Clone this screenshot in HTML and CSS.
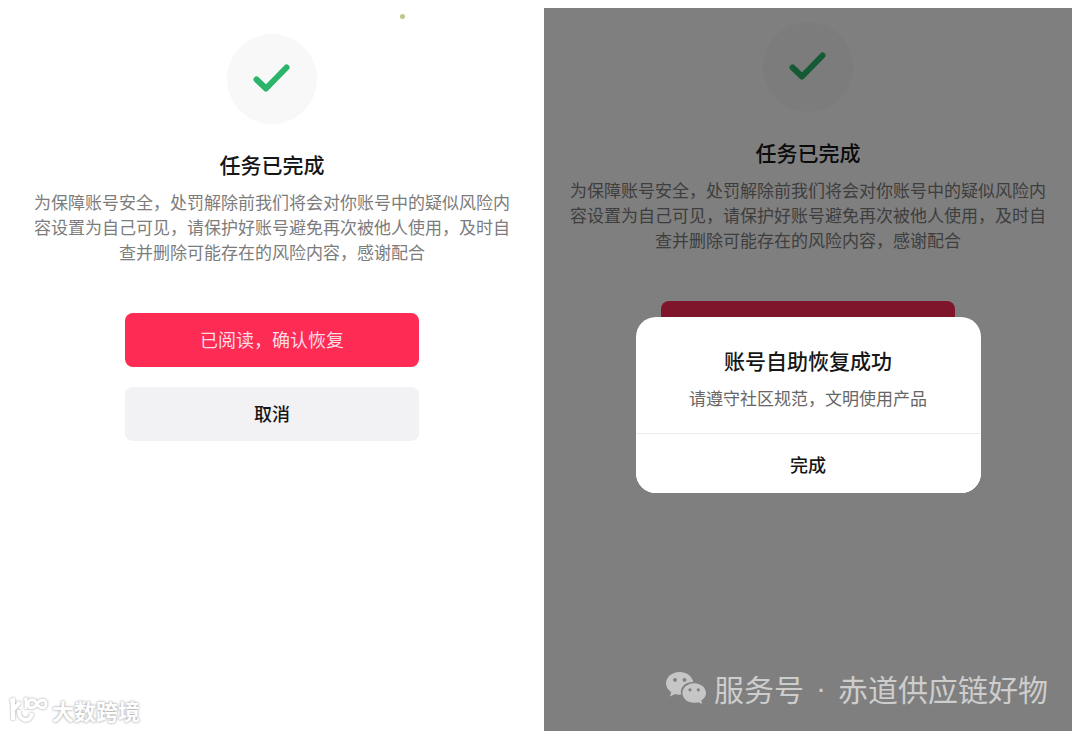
FILE: index.html
```html
<!DOCTYPE html>
<html lang="zh-CN">

<head>
    <meta charset="utf-8">
    <meta name="viewport" content="width=device-width, initial-scale=1">
    <title>任务已完成</title>
    <link rel="stylesheet" href="styles.css">
</head>

<body>
<main class="screens">

    <section class="screen">
        <i class="dot"></i>
        <div class="badge">
            <svg class="check" viewBox="0 0 40 30"><path d="M4.5 15.5 L14 24.5 L34.5 3.5"/></svg>
        </div>
        <h1 class="title">任务已完成</h1>
        <p class="text">为保障账号安全，处罚解除前我们将会对你账号中的疑似风险内容设置为自己可见，请保护好账号避免再次被他人使用，及时自查并删除可能存在的风险内容，感谢配合</p>
        <div class="actions">
            <button class="btn btn-red" type="button">已阅读，确认恢复</button>
            <button class="btn btn-grey" type="button">取消</button>
        </div>

        <div class="brand">
            <svg class="brand-logo" viewBox="0 0 40 28">
                <path class="thick" d="M2 5 L5 4 V24 M5 14 L12 6"/>
                <path class="thick" d="M11 14 C10 26 23 27 24 17"/>
                <path class="thin" d="M16 4 L18 3 V13"/>
                <path class="thin" d="M29 8 C26 2 20 3 20 8 C20 13 26 13 29 8 C32 3 38 3 38 8 C38 13 32 13 29 8 Z"/>
            </svg>
            <span>大数跨境</span>
        </div>
    </section>

    <section class="screen screen-dimmed">
        <div class="badge">
            <svg class="check" viewBox="0 0 40 30"><path d="M4.5 15.5 L14 24.5 L34.5 3.5"/></svg>
        </div>
        <h1 class="title">任务已完成</h1>
        <p class="text">为保障账号安全，处罚解除前我们将会对你账号中的疑似风险内容设置为自己可见，请保护好账号避免再次被他人使用，及时自查并删除可能存在的风险内容，感谢配合</p>
        <div class="actions">
            <button class="btn btn-red" type="button" tabindex="-1"></button>
        </div>

        <!-- popup over the page -->
        <div class="overlay">
            <div class="modal" role="dialog" aria-labelledby="modal-title">
                <div class="modal-body">
                    <h2 class="title" id="modal-title">账号自助恢复成功</h2>
                    <p class="text">请遵守社区规范，文明使用产品</p>
                </div>
                <button class="modal-btn" type="button">完成</button>
            </div>
        </div>

        <div class="account">
            <svg class="wechat" viewBox="0 0 40 32">
                <path fill-rule="evenodd" d="M13.5 0 C6 0 0 5 0 11.3 C0 15 2 18 5.2 20.2 L4 24.5 L9 22 C11 22.6 13 22.8 15.2 22.6 C13.5 15.5 19 10 27.3 10 C26 4 20.5 0 13.5 0 Z M9 6 A1.9 1.9 0 1 1 9 9.8 A1.9 1.9 0 1 1 9 6 Z M18.5 6 A1.9 1.9 0 1 1 18.5 9.8 A1.9 1.9 0 1 1 18.5 6 Z"/>
                <path fill-rule="evenodd" d="M28.2 11.2 C21.7 11.2 16.4 15.6 16.4 21 C16.4 26.5 21.7 30.8 28.2 30.8 C29.7 30.8 31 30.6 32.3 30.2 L36.2 32 L35.2 28.6 C38.2 26.8 40 24 40 21 C40 15.6 34.7 11.2 28.2 11.2 Z M24 16.2 A1.6 1.6 0 1 1 24 19.4 A1.6 1.6 0 1 1 24 16.2 Z M32.3 16.2 A1.6 1.6 0 1 1 32.3 19.4 A1.6 1.6 0 1 1 32.3 16.2 Z"/>
            </svg>
            <span>服务号</span>
            <span class="account-sep">·</span>
            <span>赤道供应链好物</span>
        </div>
    </section>

</main>
</body>
</html>
```

FILE: styles.css
```css
* {
    box-sizing: border-box;
}

body {
    margin: 0;
    background-color: white;
    font-family: "Noto Sans CJK SC", "Liberation Sans", sans-serif;
    color: #161616;
}

h1, h2, p {
    margin: 0;
}

button {
    font-family: inherit;
    border: none;
    padding: 0;
}

.screens {
    display: grid;
    grid-template-columns: 1fr 1fr;
    gap: 8px;
    min-height: 100vh;
    padding: 8px 8px 0;
}

.screen {
    position: relative;
    padding: 26px 24px 0;
    text-align: center;
}
.screen-dimmed {
    padding-top: 14px;
}

.badge {
    display: flex;
    align-items: center;
    justify-content: center;
    width: 90px;
    height: 90px;
    margin: 0 auto 25px;
    border-radius: 50%;
    background-color: #f8f8f8;
}
.check {
    width: 40px;
    height: 30px;
    fill: none;
    stroke: #2cb56a;
    stroke-width: 6;
    stroke-linecap: round;
    stroke-linejoin: round;
}

.title {
    font-size: 21px;
    font-weight: 500;
    line-height: 30px;
}
.text {
    margin-top: 10px;
    font-size: 17px;
    line-height: 25px;
    color: #7c7c7c;
}

.actions {
    display: flex;
    flex-direction: column;
    gap: 20px;
    margin-top: 49px;
    padding: 0 93px;
}
.btn {
    height: 54px;
    padding-bottom: 3px;
    border-radius: 8px;
    font-size: 18px;
}
.btn-red {
    background-color: #fe2b54;
    color: #ffdce4;
}
.btn-grey {
    background-color: #f2f2f5;
    color: #161616;
    font-weight: 500;
}

.dot {
    position: absolute;
    top: 6px;
    left: 392px;
    width: 5px;
    height: 5px;
    border-radius: 50%;
    background-color: #c3c58c;
}

/* popup */
.overlay {
    position: absolute;
    inset: 0;
    padding-top: 309px;
    background-color: rgba(0, 0, 0, 0.5);
}
.modal {
    width: 345px;
    margin: 0 auto;
    border-radius: 20px;
    background-color: white;
    overflow: hidden;
}
.modal-body {
    padding: 28px 20px 23px;
}
.modal .text {
    color: #666;
}
.modal-btn {
    width: 100%;
    height: 60px;
    border-top: 1px solid #ececec;
    background-color: white;
    color: #161616;
    font-size: 18px;
    font-weight: 500;
}

/* marks in the bottom corners */
.brand {
    position: absolute;
    left: 0;
    bottom: 6px;
    display: flex;
    align-items: center;
    gap: 4px;
    color: white;
    font-size: 22px;
    font-weight: 700;
    line-height: 30px;
    text-shadow: 0 0 2px #aaa, 0 0 3px #bbb;
}
.brand-logo {
    width: 40px;
    height: 28px;
    fill: none;
    stroke: white;
    filter: drop-shadow(0 0 1px #999);
}
.brand-logo .thick {
    stroke-width: 4;
}
.brand-logo .thin {
    stroke-width: 3;
}

.account {
    position: absolute;
    right: 24px;
    bottom: 25px;
    display: flex;
    align-items: center;
    gap: 8px;
    color: #cdcdcd;
    font-size: 30px;
    line-height: 36px;
    white-space: nowrap;
}
.account-sep {
    width: 18px;
    font-family: "Liberation Sans", sans-serif;
}
.wechat {
    width: 40px;
    height: 32px;
    fill: #c6c6c6;
}
```
